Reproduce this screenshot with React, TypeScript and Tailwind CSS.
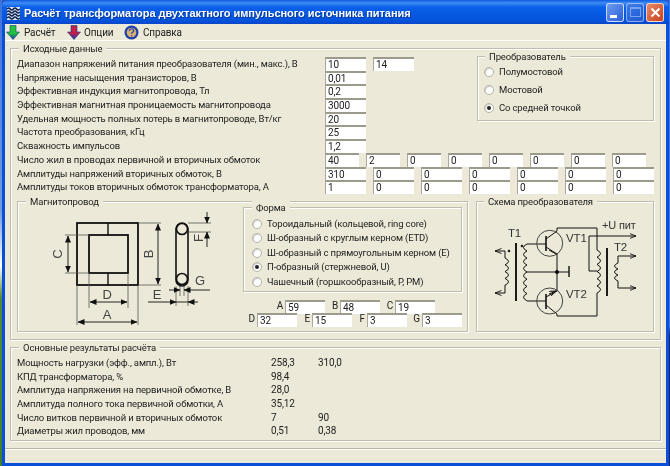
import type { ReactNode } from "react";

const inputRows = [
  { label: "Диапазон напряжений питания преобразователя (мин., макс.), В", values: ["10", "14"] },
  { label: "Напряжение насыщения транзисторов, В", values: ["0,01"] },
  { label: "Эффективная индукция магнитопровода, Тл", values: ["0,2"] },
  { label: "Эффективная магнитная проницаемость магнитопровода", values: ["3000"] },
  { label: "Удельная мощность полных потерь в магнитопроводе, Вт/кг", values: ["20"] },
  { label: "Частота преобразования, кГц", values: ["25"] },
  { label: "Скважность импульсов", values: ["1,2"] },
];

const results = [
  ["Мощность нагрузки (эфф., ампл.), Вт", "258,3", "310,0"],
  ["КПД трансформатора, %", "98,4", ""],
  ["Амплитуда напряжения на первичной обмотке, В", "28,0", ""],
  ["Амплитуда полного тока первичной обмотки, А", "35,12", ""],
  ["Число витков первичной и вторичных обмоток", "7", "90"],
  ["Диаметры жил проводов, мм", "0,51", "0,38"],
];

const forms = [
  "Тороидальный (кольцевой, ring core)",
  "Ш-образный с круглым керном (ETD)",
  "Ш-образный с прямоугольным керном (E)",
  "П-образный (стержневой, U)",
  "Чашечный (горшкообразный, P, PM)",
];

const Field = ({ value, w = "w-[41px]" }: { value: string; w?: string }) => (
  <div className={`${w} h-[14px] shrink-0 border-t-2 border-l border-t-[#9c9a8c] border-l-[#aca899] bg-white pl-[2px] text-[10px] leading-[12px] text-[#222]`}>
    {value}
  </div>
);

const Group = ({ title, titleLeft, className, children }: { title: string; titleLeft: string; className: string; children: ReactNode }) => (
  <div className={`relative border border-[#c0bdae] shadow-[inset_1px_1px_0_#fff,1px_1px_0_#fff] ${className}`}>
    <span className={`absolute top-[-7px] ${titleLeft} bg-[#ece9d8] px-[4px] text-[9.5px] leading-[13px] whitespace-nowrap text-[#222]`}>{title}</span>
    {children}
  </div>
);

const Radio = ({ label, checked, className }: { label: string; checked?: boolean; className: string }) => (
  <div className={`flex items-center text-[9.5px] text-[#222] whitespace-nowrap ${className}`}>
    <span className="flex h-[10px] w-[10px] shrink-0 items-center justify-center rounded-full border border-[#b5b3a5] bg-white shadow-[inset_1px_1px_1px_#ccc]">
      {checked && <span className="h-[4px] w-[4px] rounded-full bg-[#222]" />}
    </span>
    <span className="ml-[5px]">{label}</span>
  </div>
);

const Arrow = ({ id, top }: { id: string; top: string }) => (
  <svg width="14" height="15" viewBox="0 0 14 15" className="shrink-0">
    <defs>
      <linearGradient id={id} x1="0" y1="0" x2="0" y2="1">
        <stop offset="0" stopColor={top} />
        <stop offset="0.55" stopColor={top} />
        <stop offset="1" stopColor="#1636b8" />
      </linearGradient>
    </defs>
    <path d="M4 0.5h6v6.5h3.5L7 14.5 0.5 7H4z" fill={`url(#${id})`} stroke="#1a3a8c" strokeWidth="0.6" />
  </svg>
);

const CoreDrawing = () => (
  <svg width="225" height="129" viewBox="18 203 225 129" className="shrink-0" fill="none" stroke="#111" fontFamily="Liberation Sans, sans-serif">
    <defs>
      <marker id="tip" markerUnits="userSpaceOnUse" markerWidth="7" markerHeight="6" refX="6.5" refY="3" orient="auto-start-reverse">
        <path d="M0 0L7 3L0 6z" fill="#111" stroke="none" />
      </marker>
    </defs>
    <rect x="77" y="224" width="61" height="62" strokeWidth="1.8" />
    <rect x="89" y="236" width="39" height="38" strokeWidth="1.8" />
    <path d="M108 224V236M108 274V286" strokeWidth="1.4" />
    <g strokeWidth="0.8" stroke="#555">
      <path d="M65 236H89M65 274H89M138 224H161M138 286H161M89 274V309M128 274V309M77 286V326M138 286V326" />
      <path d="M188 224H211M188 233H211M176 287V307M188 287V307M180 280V297M184 280V297" />
    </g>
    <g strokeWidth="0.9">
      <path d="M68 237V273" markerStart="url(#tip)" markerEnd="url(#tip)" />
      <path d="M158 225V285" markerStart="url(#tip)" markerEnd="url(#tip)" />
      <path d="M90 303H127" markerStart="url(#tip)" markerEnd="url(#tip)" />
      <path d="M78 323H137" markerStart="url(#tip)" markerEnd="url(#tip)" />
      <path d="M207 213V224" markerEnd="url(#tip)" />
      <path d="M207 248V233" markerEnd="url(#tip)" />
      <path d="M169 291H180" markerEnd="url(#tip)" />
      <path d="M210 291H184" markerEnd="url(#tip)" />
      <path d="M148 303H176" markerEnd="url(#tip)" />
      <path d="M198 303H188" markerEnd="url(#tip)" />
      <path d="M176 303H188" />
    </g>
    <rect x="176" y="224" width="12" height="63" rx="6" strokeWidth="1.6" />
    <circle cx="182" cy="230" r="5.5" fill="#ece9d8" strokeWidth="1.6" />
    <circle cx="182" cy="280" r="5.5" fill="#ece9d8" strokeWidth="1.6" />
    <g fill="#444" stroke="none" fontSize="13" textAnchor="middle">
      <text x="107" y="300">D</text>
      <text x="107" y="320">A</text>
      <text x="157" y="300">E</text>
      <text x="200" y="286">G</text>
      <text transform="translate(62 255) rotate(-90)">C</text>
      <text transform="translate(153 255) rotate(-90)">B</text>
      <text transform="translate(203 239) rotate(-90)">F</text>
    </g>
  </svg>
);

const coil = (x: number, y: number, n: number, dir: number, h: number) =>
  `M${x} ${y}` + Array.from({ length: n }, () => `q${dir * 7} ${h / 2} 0 ${h}`).join("");

const SchemeDrawing = () => (
  <svg width="176" height="128" viewBox="477 204 176 128" fill="none" stroke="#111" strokeWidth="1" fontFamily="Liberation Sans, sans-serif">
    <defs>
      <marker id="open" markerUnits="userSpaceOnUse" markerWidth="7" markerHeight="6" refX="6.5" refY="3" orient="auto">
        <path d="M0 0.5L6.5 3L0 5.5" fill="none" stroke="#111" strokeWidth="0.9" />
      </marker>
    </defs>
    <path d="M516 245V303M607 250V298" strokeWidth="1.9" />
    <path d={coil(505, 260, 4, 1, 6.8)} />
    <path d="M505 260V253H495" markerEnd="url(#open)" />
    <path d="M505 287V295H495" markerEnd="url(#open)" />
    <path d={coil(527, 246, 4, -1, 7)} />
    <path d={coil(527, 274, 4, -1, 7.2)} />
    <path d="M527 246H546M527 303H546M527 274H569" />
    <path d="M569 268V279" strokeWidth="1.4" />
    <circle cx="557" cy="274" r="1.6" fill="#111" />
    <circle cx="509" cy="253" r="0.9" fill="#111" />
    <circle cx="522" cy="248" r="0.9" fill="#111" />
    <circle cx="549.7" cy="245.3" r="13" stroke="#444" />
    <circle cx="549.7" cy="303" r="13" stroke="#444" />
    <path d="M546 238V253M546 296V311" strokeWidth="1.6" />
    <path d="M546 241L557 233V230H597V252M546 249L557 256V293L546 299M546 307L557 316V318H597V295" />
    <path d="M549 252L556 256M549 296L556 293" markerEnd="url(#open)" />
    <path d={coil(597, 252, 3, 1, 7.2)} />
    <path d={coil(597, 273.5, 3, 1, 7.2)} />
    <path d="M597 273H589V238H636" markerEnd="url(#open)" />
    <path d={coil(618, 265, 3, -1, 6)} />
    <path d="M618 265V258H636" markerEnd="url(#open)" />
    <path d="M618 283V290H636" markerEnd="url(#open)" />
    <g fill="#333" stroke="none" fontSize="11.5">
      <text x="508" y="239">T1</text>
      <text x="566" y="244">VT1</text>
      <text x="566" y="300">VT2</text>
      <text x="614" y="253">T2</text>
      <text x="602" y="231" fontSize="11">+U пит</text>
    </g>
  </svg>
);

const WindowButton = ({ tone, children }: { tone: string; children: ReactNode }) => (
  <div className={`flex h-[19px] w-[18px] items-center justify-center rounded-[3px] border border-white/70 ${tone}`}>{children}</div>
);

const labelClass = "w-[308px] whitespace-nowrap text-[9.5px] leading-[14px] text-[#222]";

export default function App() {
  return (
    <div className="flex h-[466px] w-[670px] overflow-hidden bg-[#2a55c8] font-['Roboto',sans-serif] tracking-[-0.15px] blur-[0.35px]">
      <div className="w-[2px] shrink-0 bg-[linear-gradient(180deg,#3f72d8_0%,#6f9ae4_45%,#ffffff_57%,#4f8a3a_64%,#3f7f2c_100%)]" />

      <div className="flex w-[667px] shrink-0 flex-col rounded-t-[6px] bg-[#0a4fd8]">
        <div className="flex h-[24px] shrink-0 items-center rounded-t-[6px] bg-[linear-gradient(180deg,#0f5ae0_0%,#3d8cf5_12%,#0a5fe8_30%,#0553dc_85%,#0a45c8_100%)] pl-[5px] pr-[5px]">
          <svg width="13" height="13" viewBox="0 0 13 13" className="mt-[2px] shrink-0">
            <rect width="13" height="13" fill="#d8e4f8" />
            <path d="M0 2q1.6-2 3.2 0t3.2 0 3.2 0 3.4 0M0 5q1.6-2 3.2 0t3.2 0 3.2 0 3.4 0M0 8q1.6-2 3.2 0t3.2 0 3.2 0 3.4 0M0 11q1.6-2 3.2 0t3.2 0 3.2 0 3.4 0" fill="none" stroke="#10204a" strokeWidth="1.5" />
          </svg>
          <span className="mt-[3px] ml-[4px] whitespace-nowrap font-['Liberation_Sans',sans-serif] text-[11px] font-bold tracking-[-0.06px] text-white [text-shadow:1px_1px_0_#0a3a9c]">
            Расчёт трансформатора двухтактного импульсного источника питания
          </span>
          <div className="ml-auto flex gap-[2px]">
            <WindowButton tone="bg-[linear-gradient(135deg,#6f9cf0,#2a5ed8)]">
              <span className="mt-[9px] mr-[4px] h-[3px] w-[7px] bg-white" />
            </WindowButton>
            <WindowButton tone="bg-[linear-gradient(135deg,#4f82e4,#2a5ed0)] opacity-70">
              <span className="h-[10px] w-[11px] border border-t-2 border-[#a8c0f0]" />
            </WindowButton>
            <WindowButton tone="bg-[linear-gradient(135deg,#e88a68,#c8401c)]">
              <svg width="11" height="11" viewBox="0 0 11 11"><path d="M1.5 1.5l8 8M9.5 1.5l-8 8" stroke="#fff" strokeWidth="2" /></svg>
            </WindowButton>
          </div>
        </div>

        <div className="mx-[3px] mb-[3px] flex flex-1 flex-col bg-[#ece9d8]">
          <div className="flex h-[17px] shrink-0 items-center border-b border-white pl-[1px] text-[10px] text-[#222]">
            <Arrow id="down-green" top="#22c43a" />
            <span className="ml-[4px] w-[30px] whitespace-nowrap">Расчёт</span>
            <span className="ml-[13px] flex items-center">
              <Arrow id="down-purple" top="#c0204a" />
              <span className="ml-[3px] w-[28px] whitespace-nowrap">Опции</span>
            </span>
            <svg width="15" height="15" viewBox="0 0 15 15" className="ml-[12px] shrink-0">
              <circle cx="7.5" cy="7.5" r="7" fill="#1c3fa8" />
              <circle cx="7.5" cy="7.5" r="4.8" fill="#d8b070" />
              <path d="M5.2 5.8q0.4-2 2.4-2t2.2 1.8q0 1.2-1.4 1.8-0.8 0.4-0.8 1.4M7.6 10.2v1.4" fill="none" stroke="#2a4cb0" strokeWidth="1.3" />
            </svg>
            <span className="ml-[4px]">Справка</span>
          </div>

          <Group title="Исходные данные" titleLeft="left-[8px]" className="mx-[5px] mt-[7px] h-[292px] w-[651px] shrink-0 pl-[6px] pt-[8px]">
            <div className="flex">
              <div className="w-[397px]">
                {inputRows.map((row) => (
                  <div key={row.label} className="flex h-[13.7px] items-start">
                    <span className={labelClass}>{row.label}</span>
                    <div className="flex gap-[7px]">
                      {row.values.map((v) => (
                        <Field key={v} value={v} />
                      ))}
                    </div>
                  </div>
                ))}
              </div>
              <Group title="Преобразователь" titleLeft="left-[7px]" className="mt-[-1px] ml-[63px] h-[65px] w-[177px] pl-[6px] pt-[6px]">
                <Radio label="Полумостовой" className="h-[18px]" />
                <Radio label="Мостовой" className="h-[18px]" />
                <Radio label="Со средней точкой" checked className="h-[18px]" />
              </Group>
            </div>

            <div className="flex h-[13.7px] items-start">
              <span className={labelClass}>Число жил в проводах первичной и вторичных обмоток</span>
              <div className="flex gap-[7px]">
                {["40", "2", "0", "0", "0", "0", "0", "0"].map((v, i) => (
                  <Field key={i} value={v} w="w-[34px]" />
                ))}
              </div>
            </div>
            {[
              { label: "Амплитуды напряжений вторичных обмоток, В", values: ["310", "0", "0", "0", "0", "0", "0"] },
              { label: "Амплитуды токов вторичных обмоток трансформатора, А", values: ["1", "0", "0", "0", "0", "0", "0"] },
            ].map((row) => (
              <div key={row.label} className="flex h-[13.7px] items-start">
                <span className={labelClass}>{row.label}</span>
                <div className="flex gap-[7px]">
                  {row.values.map((v, i) => (
                    <Field key={i} value={v} />
                  ))}
                </div>
              </div>
            ))}

            <div className="mt-[7px] flex gap-[8px]">
              <Group title="Магнитопровод" titleLeft="left-[8px]" className="flex h-[131px] w-[451px]">
                <CoreDrawing />
                <div className="pt-[5px]">
                  <Group title="Форма" titleLeft="left-[8px]" className="h-[85px] w-[219px] pl-[8px] pt-[9px]">
                    {forms.map((f, i) => (
                      <Radio key={f} label={f} checked={i === 3} className="h-[14.4px]" />
                    ))}
                  </Group>
                  <div className="mt-[8px] ml-[27px] flex">
                    {[["A", "59"], ["B", "48"], ["C", "19"]].map(([k, v]) => (
                      <div key={k} className="flex w-[55px] justify-end gap-[2px] text-[10px] leading-[12px] text-[#222]">
                        {k}
                        <Field value={v} w="w-[40px]" />
                      </div>
                    ))}
                  </div>
                  <div className="mt-[-1px] ml-[-1px] flex">
                    {[["D", "32"], ["E", "15"], ["F", "3"], ["G", "3"]].map(([k, v]) => (
                      <div key={k} className="flex w-[55px] justify-end gap-[2px] text-[10px] leading-[12px] text-[#222]">
                        {k}
                        <Field value={v} w="w-[40px]" />
                      </div>
                    ))}
                  </div>
                </div>
              </Group>
              <Group title="Схема преобразователя" titleLeft="left-[7px]" className="h-[131px] w-[178px]">
                <SchemeDrawing />
              </Group>
            </div>
          </Group>

          <Group title="Основные результаты расчёта" titleLeft="left-[8px]" className="mx-[5px] mt-[7px] h-[94px] w-[651px] shrink-0 pl-[6px] pt-[8px]">
            {results.map(([label, a, b]) => (
              <div key={label} className="flex h-[13.7px] items-center text-[9.5px] leading-[14px] text-[#222]">
                <span className="w-[254px] whitespace-nowrap">{label}</span>
                <span className="w-[47px] text-[10px]">{a}</span>
                <span className="text-[10px]">{b}</span>
              </div>
            ))}
          </Group>

          <div className="mt-[7px] h-[2px] shrink-0 border-t border-[#b8b5a5] bg-white" />
        </div>
      </div>

      <div className="w-[1px] shrink-0 bg-[linear-gradient(180deg,#3f78e8_0%,#3f78e8_70%,#12246a_72%,#12246a_100%)]" />
    </div>
  );
}
